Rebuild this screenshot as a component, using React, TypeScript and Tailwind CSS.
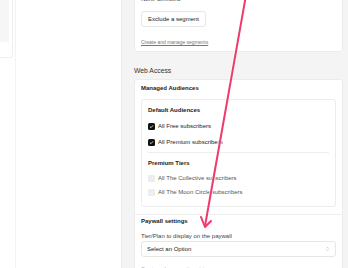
import React from "react";

const Check = ({ disabled }: { disabled?: boolean }) => (
  <span
    className={
      "flex h-[7px] w-[7px] items-center justify-center rounded-[1.5px] " +
      (disabled ? "bg-[#ececec]" : "bg-[#111]")
    }
  >
    <svg viewBox="0 0 8 8" className="h-[5px] w-[5px]">
      <path
        d="M1.5 4.2 L3.2 5.8 L6.5 2.2"
        fill="none"
        stroke={disabled ? "#fafafa" : "#fff"}
        strokeWidth="1.3"
      />
    </svg>
  </span>
);

const Row = ({ label, disabled }: { label: string; disabled?: boolean }) => (
  <div className="flex h-[9px] items-center gap-[3px]">
    <Check disabled={disabled} />
    <span className={disabled ? "text-[#555]" : "text-[#222]"}>{label}</span>
  </div>
);

export default function App() {
  return (
    <div
      className="relative flex h-[268px] w-[348px] overflow-hidden bg-white text-[6px] leading-[9px] text-[#222]"
      style={{ fontFamily: "'Liberation Sans', Arial, sans-serif" }}
    >
      {/* left sidebar */}
      <div className="w-[16px] shrink-0 border-r border-[#f3f3f3]">
        <div className="h-[58px] w-[13px] rounded-br-[3px] border-r border-b border-[#efefef]">
          <div className="h-[42px] w-[9px] bg-[#f6f6f6]" />
        </div>
      </div>
      <div className="w-[106px] shrink-0 border-r border-[#ececec]" />

      {/* main */}
      <div className="flex-1 bg-[#f4f4f4] pl-[12px] pr-[5px]">
        <div className="-mt-[10px] rounded-[3px] border border-[#ececec] bg-white px-[6px] pt-[4px] pb-[5px]">
          <div className="text-[#444]">None Selected</div>
          <div className="mt-[7px] flex h-[16px] w-[65px] items-center justify-center rounded-[3px] border border-[#e6e6e6] text-[#222]">
            Exclude a segment
          </div>
          <div className="mt-[11px] text-[5px] leading-[8px] text-[#777] underline">
            Create and manage segments
          </div>
        </div>

        <div className="mt-[14px] text-[6.8px] leading-[10px] text-[#333]">Web Access</div>

        <div className="mt-[3px] rounded-[3px] border border-[#ececec] bg-white">
          <div className="px-[6px] pt-[4px] pb-[7px]">
            <div className="font-bold">Managed Audiences</div>
            <div className="mt-[6px] rounded-[3px] border border-[#ececec] px-[6px] pt-[6px] pb-[9px]">
              <div className="font-bold">Default Audiences</div>
              <div className="mt-[7px] flex flex-col gap-[7px]">
                <Row label="All Free subscribers" />
                <Row label="All Premium subscribers" />
              </div>
              <div className="mt-[5px] border-t border-[#eeeeee]" />
              <div className="mt-[6px] font-bold">Premium Tiers</div>
              <div className="mt-[6px] flex flex-col gap-[5px]">
                <Row label="All The Collective subscribers" disabled />
                <Row label="All The Moon Circle subscribers" disabled />
              </div>
            </div>
          </div>
          <div className="border-t border-[#eeeeee] px-[6px] pt-[2px]">
            <div className="font-bold">Paywall settings</div>
            <div className="mt-[6px] text-[#444]">Tier/Plan to display on the paywall</div>
            <div className="flex h-[16px] items-center justify-between rounded-[3px] border border-[#e6e6e6] px-[5px]">
              <span>Select an Option</span>
              <svg viewBox="0 0 8 10" className="h-[6px] w-[5px]">
                <path d="M2 4 L4 2 L6 4 M2 6 L4 8 L6 6" fill="none" stroke="#aaa" strokeWidth="0.9" />
              </svg>
            </div>
            <div className="mt-[8px] text-[5px] leading-[8px] text-[#999]">Create and manage tier pricing</div>
          </div>
        </div>
      </div>

      {/* annotation arrow */}
      <svg className="pointer-events-none absolute inset-0" width="348" height="268">
        <g stroke="#ffffff" strokeOpacity="0.7" strokeWidth="3.5" fill="none" strokeLinecap="round" strokeLinejoin="round">
          <path d="M245.5 -2 L205 226" />
          <path d="M201 217 L205 227 L211 221" />
        </g>
        <g stroke="#ee3a6c" strokeWidth="2" fill="none" strokeLinecap="round" strokeLinejoin="round">
          <path d="M245.5 -2 L205 226" />
          <path d="M201 217 L205 227 L211 221" />
        </g>
      </svg>
    </div>
  );
}
